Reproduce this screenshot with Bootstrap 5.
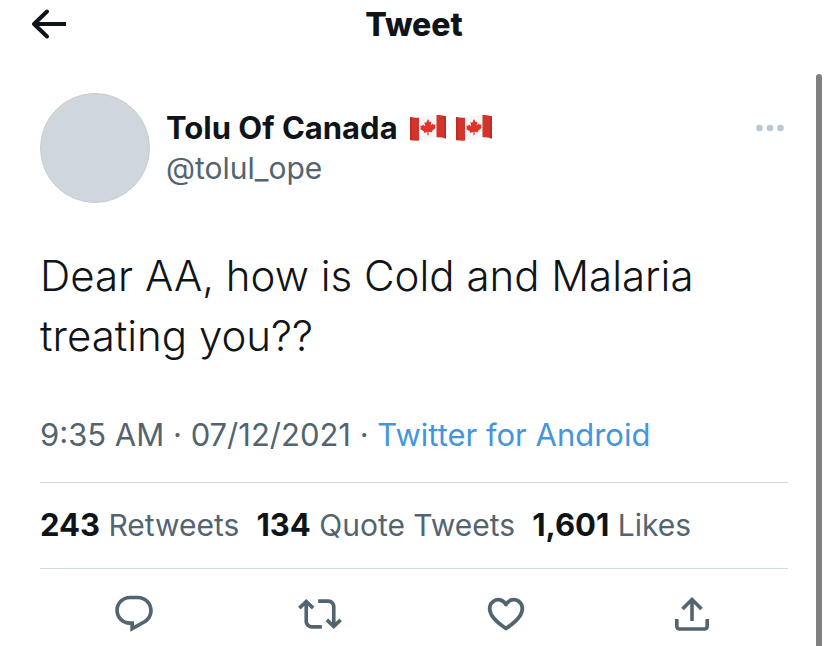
<!DOCTYPE html>
<html lang="en">
<head>
<meta charset="utf-8">
<meta name="viewport" content="width=device-width, initial-scale=1">
<title>Tweet</title>
<link href="https://cdn.jsdelivr.net/npm/bootstrap@5.3.0/dist/css/bootstrap.min.css" rel="stylesheet">
<style>
body { font-family: Inter, "Liberation Sans", sans-serif; color: #0f1419; background: #fff; overflow: hidden; }
svg { display: block; }
.topbar { display: grid; grid-template-columns: 48px 1fr 48px; padding: 0 24px; height: 48px; }
.topbar h1 { font-size: 32px; line-height: 46px; padding-top: 2px; font-weight: 800; }
.tweet { padding: 45px 40px 0; }
.avatar { width: 110px; height: 110px; background: #cfd6dc; border: 1px solid #c6cdd3; }
.author { padding-top: 15px; }
.display-name { font-size: 31px; line-height: 40px; font-weight: 700; }
.flags { gap: 10px; margin-left: 12px; }
.meta-text { font-size: 30px; line-height: 40px; color: #536471; }
.more { margin-top: 24px; }
.message { font-size: 42px; line-height: 60px; font-weight: 300; margin-top: 43px; }
.posted { font-size: 31px; margin-top: 49px; padding-bottom: 27px; }
.posted a { color: #4595de; }
.ruled { border-top: 1px solid #cfd9de; }
.stats { padding: 22px 0 23px; column-gap: 17px; }
.stats a { color: inherit; }
.stats strong { font-size: 31px; color: #0f1419; font-weight: 700; }
.actions { margin: 0 3px 0 1px; padding-top: 23px; color: #536471; }
.scroll-thumb { position: fixed; top: 74px; right: 6px; bottom: 0; width: 6px; border-radius: 3px 3px 0 0; background: #808080; }
</style>
</head>
<body>
<header class="topbar align-items-center">
  <button type="button" class="btn p-0 border-0" aria-label="Back">
    <svg width="48" height="48" viewBox="0 0 48 48" fill="none" stroke="#0f1419" stroke-width="4"><path d="M42 24H10"/><path d="M23 11.500 10 24l13 12.500" stroke-linecap="round" stroke-linejoin="round"/></svg>
  </button>
  <h1 class="mb-0 text-center">Tweet</h1>
</header>
<main>
  <article class="tweet">
    <div class="d-flex align-items-start">
      <div class="avatar rounded-circle flex-shrink-0"></div>
      <div class="author ms-3 flex-grow-1">
        <div class="display-name d-flex align-items-center">
          <span>Tolu Of Canada</span>
          <span class="flags d-flex">
            <svg width="36" height="28" viewBox="0 0 36 28" role="img" aria-label="Flag of Canada"><defs><clipPath id="wave"><path d="M0 3C6 4.500 11 3.500 17 2.200S29 .5 36 2.500V24.500C30 22.500 24 23 18 24.800S6 27.500 0 26Z"/></clipPath></defs><g id="flag" clip-path="url(#wave)"><path fill="#f6f6f6" d="M0 0h36v28H0z"/><path fill="#d2332a" d="M0 0h9v28H0zM26.500 0H36v28h-9.500z"/><path fill="#c02b23" d="M0 0h2v28H0zM34 0h2v28h-2z"/><path fill="#e0342a" d="m18 5 1.700 3.200 1.700-.8-.7 4.200 2.300-2 .5 1.200 2.200-.3-.8 2.600.9.600-3.900 3.200.4 1.300-3.700-.4v3.500h-1.200v-3.300l-3.700.9.4-1.400-4-2.600.9-.8-.9-2.400 2.200.1.500-1.300 2.400 1.700-.8-4.100 1.800.6z"/></g></svg>
            <svg width="36" height="28" viewBox="0 0 36 28" role="img" aria-label="Flag of Canada"><use href="#flag"/></svg>
          </span>
        </div>
        <div class="meta-text">@tolul_ope</div>
      </div>
      <button type="button" class="btn p-0 border-0 more" aria-label="More">
        <svg width="36" height="22" viewBox="0 0 36 22" fill="#b9c8d3"><circle cx="7.500" cy="11" r="3.300"/><circle cx="18" cy="11" r="3.300"/><circle cx="28.500" cy="11" r="3.300"/></svg>
      </button>
    </div>
    <p class="message mb-0">Dear AA, how is Cold and Malaria treating you??</p>
    <div class="meta-text posted">9:35 AM · 07/12/2021 · <a href="#" class="text-decoration-none">Twitter for Android</a></div>
    <div class="stats ruled meta-text d-flex flex-wrap">
      <a href="#" class="text-decoration-none"><strong>243</strong> Retweets</a>
      <a href="#" class="text-decoration-none"><strong>134</strong> Quote Tweets</a>
      <a href="#" class="text-decoration-none"><strong>1,601</strong> Likes</a>
    </div>
    <div class="ruled">
      <div class="row row-cols-4 g-0 actions">
        <button type="button" class="btn p-0 border-0 col d-flex justify-content-center" aria-label="Reply"><svg width="44" height="44" viewBox="0 0 24 24" fill="#536471"><path d="M1.751 10c0-4.420 3.584-8 8.005-8h4.366c4.490 0 8.129 3.640 8.129 8.130 0 2.960-1.607 5.680-4.196 7.110l-8.054 4.460v-3.690h-.067c-4.490.1-8.183-3.510-8.183-8.010zm8.005-6c-3.317 0-6.005 2.690-6.005 6 0 3.370 2.770 6.080 6.138 6.010l.351-.01h1.761v2.300l5.087-2.810c1.951-1.080 3.163-3.130 3.163-5.360 0-3.390-2.744-6.130-6.129-6.130H9.756z"/></svg></button>
        <button type="button" class="btn p-0 border-0 col d-flex justify-content-center" aria-label="Retweet"><svg width="44" height="44" viewBox="0 0 24 24" fill="#536471"><path d="M4.500 3.880l4.432 4.140-1.364 1.460L5.500 7.550V16c0 1.100.896 2 2 2H13v2H7.500c-2.209 0-4-1.790-4-4V7.550L1.432 9.480.068 8.020 4.500 3.880zM16.500 6H11V4h5.500c2.209 0 4 1.790 4 4v8.450l2.068-1.930 1.364 1.460-4.432 4.140-4.432-4.140 1.364-1.460 2.068 1.930V8c0-1.100-.896-2-2-2z"/></svg></button>
        <button type="button" class="btn p-0 border-0 col d-flex justify-content-center" aria-label="Like"><svg width="44" height="44" viewBox="0 0 44 44" fill="none" stroke="#536471" stroke-width="3.800" stroke-linejoin="round"><path d="M22 12.500C19 7.500 13.500 6.500 9.500 9.200 5.300 12 4.500 18 7.500 23c3 5 8.500 9.500 14.500 13.500C28 32.500 33.500 28 36.500 23c3-5 2.200-11-2-13.800-4-2.700-9.500-1.700-12.500 3.300z"/></svg></button>
        <button type="button" class="btn p-0 border-0 col d-flex justify-content-center" aria-label="Share"><svg width="44" height="44" viewBox="0 0 44 44" fill="none" stroke="#536471" stroke-width="3.600"><path d="M22 29V7.500M12.500 17 22 7.500 31.500 17M6.800 27v7q0 3 3 3h24.400q3 0 3-3v-7"/></svg></button>
      </div>
    </div>
  </article>
</main>
<div class="scroll-thumb"></div>
<script src="https://cdn.jsdelivr.net/npm/bootstrap@5.3.0/dist/js/bootstrap.bundle.min.js"></script>
</body>
</html>
